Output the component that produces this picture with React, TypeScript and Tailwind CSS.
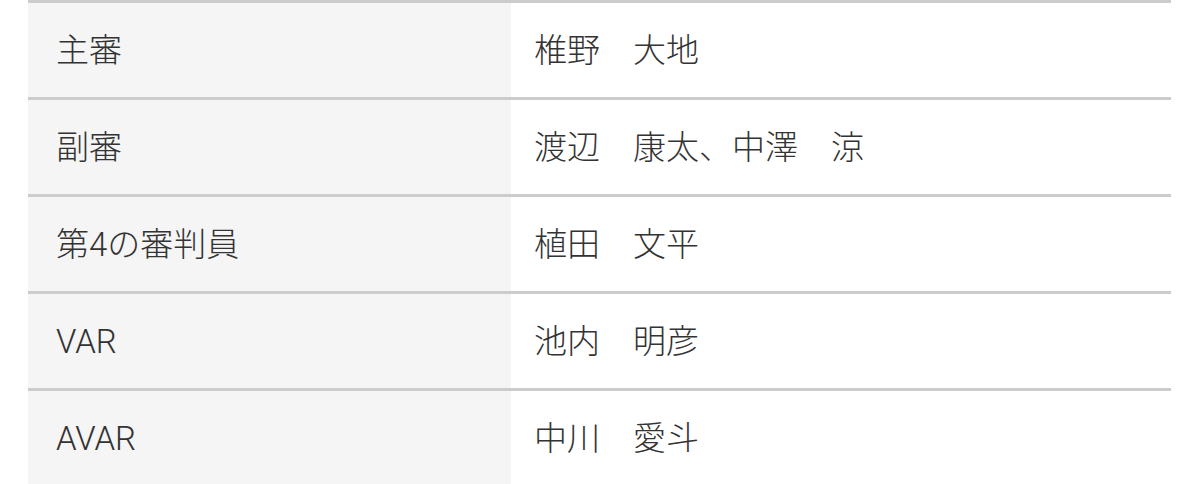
import React from "react";

const rows: [string, string][] = [
  ["主審", "椎野　大地"],
  ["副審", "渡辺　康太、中澤　涼"],
  ["第4の審判員", "植田　文平"],
  ["VAR", "池内　明彦"],
  ["AVAR", "中川　愛斗"],
];

export default function App() {
  return (
    <div
      className="w-[1200px] h-[484px] bg-white overflow-hidden text-[#333333]"
      style={{ fontFamily: 'Roboto, "Noto Sans CJK JP", sans-serif' }}
    >
      <div className="ml-[28px] w-[1143px] flex flex-col">
        {rows.map(([k, v]) => (
          <div key={k} className="flex border-t-[3px] border-[#cccccc] h-[97px]">
            <div className="w-[483px] bg-[#f5f5f5] flex items-center pl-[28px] text-[33px] leading-none font-light">
              {k}
            </div>
            <div className="flex-1 flex items-center pl-[23px] text-[33px] leading-none font-light">
              {v}
            </div>
          </div>
        ))}
      </div>
    </div>
  );
}
